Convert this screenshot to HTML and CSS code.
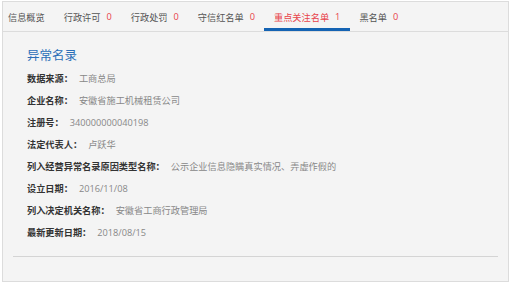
FILE: index.html
```html
<!DOCTYPE html>
<html lang="zh-CN">
<head>
    <meta charset="UTF-8">
    <title>异常名录</title>
    <link rel="stylesheet" href="styles.css">
</head>
<body>
    <div class="panel">
        <div class="tabs">
            <div class="tab first">信息概览</div>
            <div class="tab">行政许可<span class="count">0</span></div>
            <div class="tab">行政处罚<span class="count">0</span></div>
            <div class="tab">守信红名单<span class="count">0</span></div>
            <div class="tab active">重点关注名单<span class="count">1</span></div>
            <div class="tab">黑名单<span class="count">0</span></div>
        </div>

        <div class="content">
            <h2 class="title">异常名录</h2>
            <div class="row"><span class="label">数据来源：</span><span class="value">工商总局</span></div>
            <div class="row"><span class="label">企业名称：</span><span class="value">安徽省施工机械租赁公司</span></div>
            <div class="row"><span class="label">注册号：</span><span class="value">340000000040198</span></div>
            <div class="row"><span class="label">法定代表人：</span><span class="value">卢跃华</span></div>
            <div class="row"><span class="label">列入经营异常名录原因类型名称：</span><span class="value">公示企业信息隐瞒真实情况、弄虚作假的</span></div>
            <div class="row"><span class="label">设立日期：</span><span class="value">2016/11/08</span></div>
            <div class="row"><span class="label">列入决定机关名称：</span><span class="value">安徽省工商行政管理局</span></div>
            <div class="row"><span class="label">最新更新日期：</span><span class="value">2018/08/15</span></div>
            <div class="divider"></div>
        </div>
    </div>
</body>
</html>
```

FILE: styles.css
```css
body {
    margin: 0;
    background: #fff;
    font-family: "Open Sans", "Noto Sans CJK SC", sans-serif;
}

.panel {
    margin: 1px 2px 0 2px;
    height: 279px;
    background: #f4f4f4;
    border: 1px solid #dcdcdc;
}

.tabs {
    display: flex;
    height: 29px;
    border-bottom: 1px solid #dcdcdc;
}

.tab {
    display: flex;
    align-items: center;
    padding: 3px 9.5px 0 9.5px;
    font-size: 9.2px;
    color: #555;
    box-sizing: border-box;
    border-bottom: 3px solid transparent;
}

.tab.first {
    padding-left: 5px;
}

.tab.active {
    color: #e8434a;
    border-bottom-color: #1463b3;
}

.count {
    margin-left: 6px;
    color: #e8434a;
}

.content {
    padding: 14px 10px 0 10px;
}

.title {
    margin: 0 0 2px 14px;
    font-size: 12.5px;
    line-height: 20px;
    font-weight: normal;
    color: #2b6fb8;
}

.row {
    margin-left: 14px;
    height: 22px;
    line-height: 22px;
    font-size: 9.2px;
}

.label {
    font-weight: bold;
    color: #333;
    margin-right: 6px;
}

.value {
    color: #888;
}

.divider {
    margin-top: 12px;
    border-top: 1px solid #d4d4d4;
}
```
